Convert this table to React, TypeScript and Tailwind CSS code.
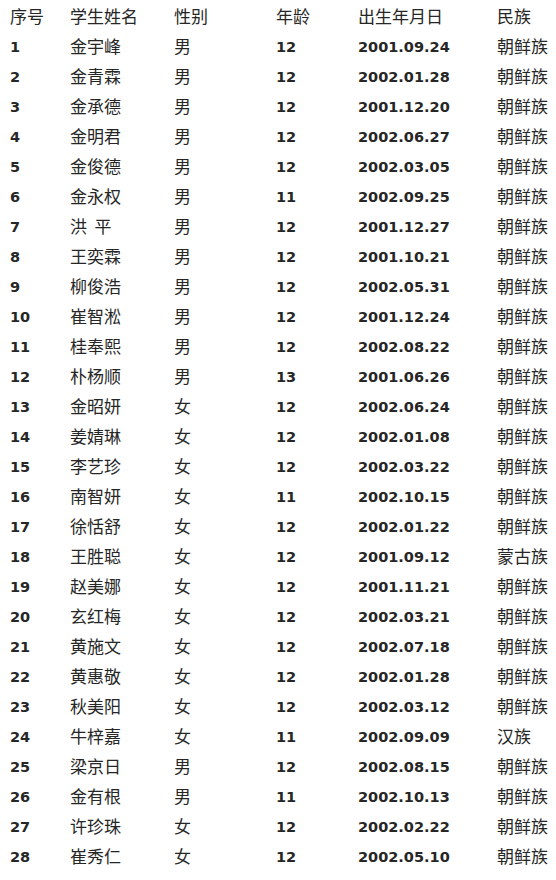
import React from 'react';

const students: [string, string, string, string, string][] = [
  ['金宇峰', '男', '12', '2001.09.24', '朝鲜族'],
  ['金青霖', '男', '12', '2002.01.28', '朝鲜族'],
  ['金承德', '男', '12', '2001.12.20', '朝鲜族'],
  ['金明君', '男', '12', '2002.06.27', '朝鲜族'],
  ['金俊德', '男', '12', '2002.03.05', '朝鲜族'],
  ['金永权', '男', '11', '2002.09.25', '朝鲜族'],
  ['洪  平', '男', '12', '2001.12.27', '朝鲜族'],
  ['王奕霖', '男', '12', '2001.10.21', '朝鲜族'],
  ['柳俊浩', '男', '12', '2002.05.31', '朝鲜族'],
  ['崔智淞', '男', '12', '2001.12.24', '朝鲜族'],
  ['桂奉熙', '男', '12', '2002.08.22', '朝鲜族'],
  ['朴杨顺', '男', '13', '2001.06.26', '朝鲜族'],
  ['金昭妍', '女', '12', '2002.06.24', '朝鲜族'],
  ['姜婧琳', '女', '12', '2002.01.08', '朝鲜族'],
  ['李艺珍', '女', '12', '2002.03.22', '朝鲜族'],
  ['南智妍', '女', '11', '2002.10.15', '朝鲜族'],
  ['徐恬舒', '女', '12', '2002.01.22', '朝鲜族'],
  ['王胜聪', '女', '12', '2001.09.12', '蒙古族'],
  ['赵美娜', '女', '12', '2001.11.21', '朝鲜族'],
  ['玄红梅', '女', '12', '2002.03.21', '朝鲜族'],
  ['黄施文', '女', '12', '2002.07.18', '朝鲜族'],
  ['黄惠敬', '女', '12', '2002.01.28', '朝鲜族'],
  ['秋美阳', '女', '12', '2002.03.12', '朝鲜族'],
  ['牛梓嘉', '女', '11', '2002.09.09', '汉族'],
  ['梁京日', '男', '12', '2002.08.15', '朝鲜族'],
  ['金有根', '男', '11', '2002.10.13', '朝鲜族'],
  ['许珍珠', '女', '12', '2002.02.22', '朝鲜族'],
  ['崔秀仁', '女', '12', '2002.05.10', '朝鲜族'],
];

const headers = ['序号', '学生姓名', '性别', '年龄', '出生年月日', '民族'];

const grid = 'grid grid-cols-[60px_104px_102px_82px_139px_1fr] h-[30px] items-center';
const cn = "text-[17px] font-['Noto_Sans_CJK_SC',sans-serif]";
const num = "pt-[4px] text-[14.5px] font-bold font-['DejaVu_Sans','Noto_Sans_CJK_SC',sans-serif]";

export default function App() {
  return (
    <div className="w-[556px] h-[880px] bg-white text-[#262626] pt-[1px] pl-[10px]">
      <div className={grid}>
        {headers.map((h) => (
          <div key={h} className={cn}>{h}</div>
        ))}
      </div>
      {students.map(([name, sex, age, birth, nation], i) => (
        <div key={i} className={grid}>
          <div className={num}>{i + 1}</div>
          <div className={`${cn} whitespace-pre`}>{name}</div>
          <div className={cn}>{sex}</div>
          <div className={num}>{age}</div>
          <div className={num}>{birth}</div>
          <div className={cn}>{nation}</div>
        </div>
      ))}
    </div>
  );
}
